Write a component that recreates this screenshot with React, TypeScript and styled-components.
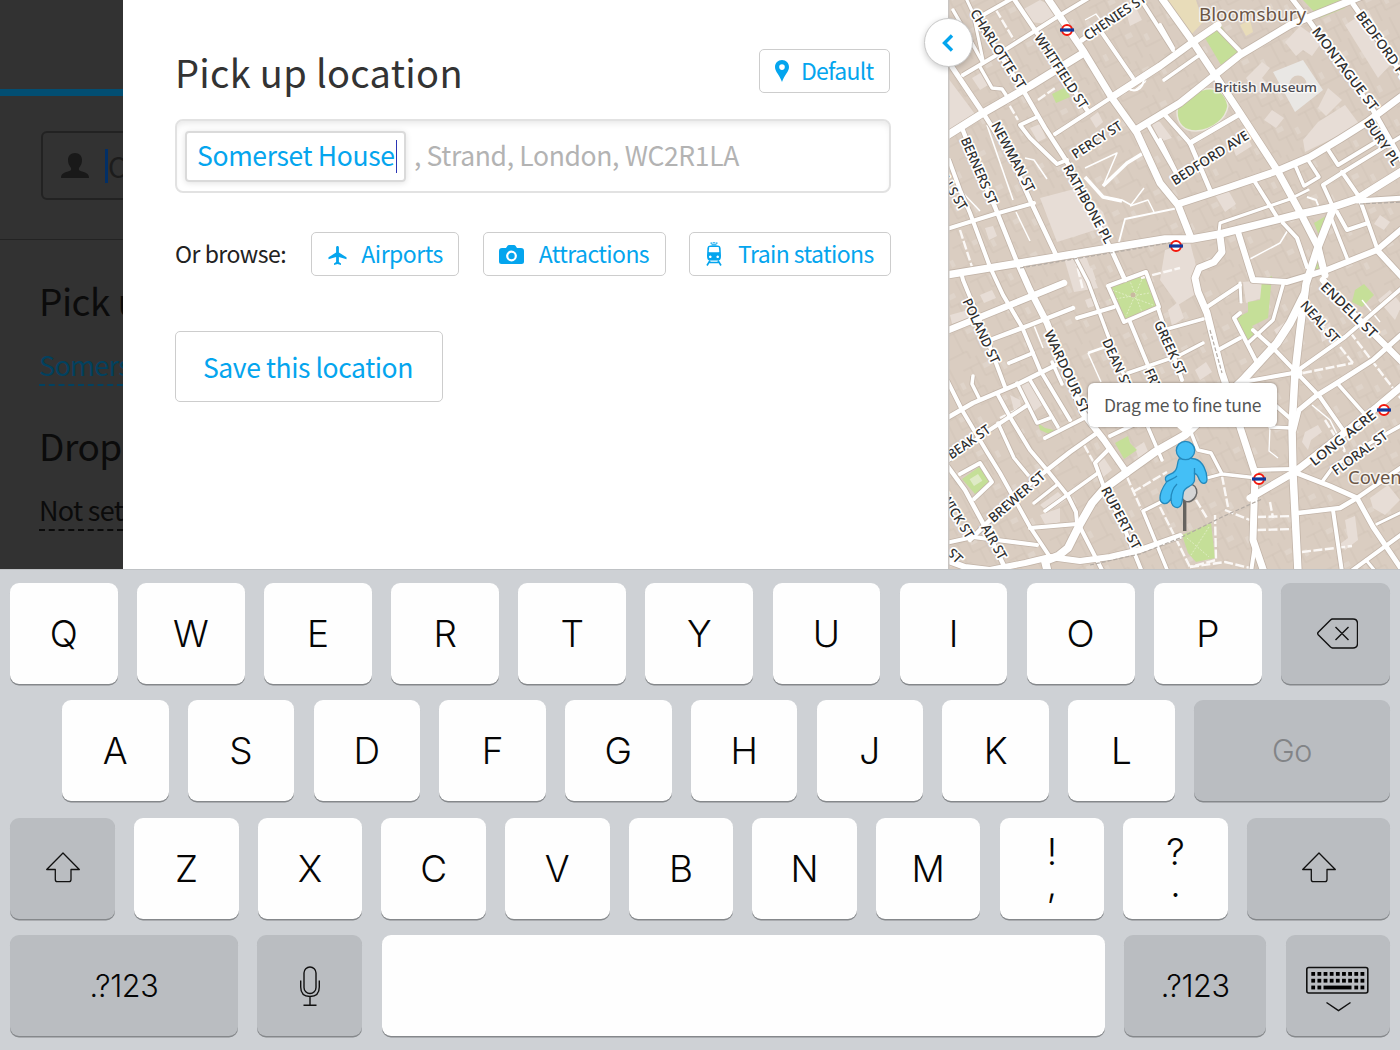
import React from 'react';
import styled, { createGlobalStyle } from 'styled-components';

const BLUE = '#04a5ee';
const UI_FONT = "'Noto Sans CJK SC', 'Noto Sans', sans-serif";
const KEY_FONT = "Inter, 'Liberation Sans', sans-serif";
const MAP_FONT = "'Noto Sans', 'Open Sans', sans-serif";

const GlobalStyle = createGlobalStyle`
  * { box-sizing: border-box; }
  body { margin: 0; background: #ced1d5; overflow: hidden; }
  button { font: inherit; padding: 0; margin: 0; cursor: pointer; }
`;

const Screen = styled.div`
  width: 1400px;
  height: 1050px;
  display: flex;
  flex-direction: column;
  overflow: hidden;
  font-family: ${UI_FONT};
`;

const Workspace = styled.div`
  display: flex;
  height: 569px;
  flex: none;
`;

/* ---------- dimmed page behind the sheet ---------- */

const Backdrop = styled.aside`
  width: 123px;
  flex: none;
  overflow: hidden;
  background: #323232;
  white-space: nowrap;
  display: flex;
  flex-direction: column;
`;

const BackdropBar = styled.div`
  height: 96px;
  flex: none;
  border-bottom: 7px solid #024e72;
`;

const BackdropSearch = styled.div`
  height: 144px;
  flex: none;
  padding: 35px 0 0 41px;
  border-bottom: 1px solid #232323;
`;

const BackdropField = styled.div`
  width: 240px;
  height: 69px;
  border: 2px solid #222;
  border-radius: 6px;
  display: flex;
  align-items: center;
  padding-left: 18px;
  font-size: 28px;
  color: #1c1c1c;
`;

const BackdropCaret = styled.span`
  width: 3px;
  height: 34px;
  margin-left: 16px;
  background: #022f66;
`;

const BackdropBody = styled.div`
  padding-left: 39px;
  display: flex;
  flex-direction: column;
`;

const BackdropTitle = styled.div<{ $top: number }>`
  margin-top: ${(p) => p.$top}px;
  height: 46px;
  line-height: 46px;
  font-size: 37px;
  letter-spacing: -0.5px;
  color: #0b0b0b;
`;

const BackdropLink = styled.div<{ $color: string }>`
  margin-top: 21px;
  height: 42px;
  line-height: 41px;
  font-size: 27px;
  letter-spacing: -0.7px;
  color: ${(p) => p.$color};
  border-bottom: 2px dashed ${(p) => p.$color};
`;

/* ---------- sheet ---------- */

const Sheet = styled.main`
  width: 825px;
  flex: none;
  background: #fff;
  padding: 49px 57px 0 52px;
  display: flex;
  flex-direction: column;
  align-items: stretch;
`;

const SheetHeader = styled.header`
  display: flex;
  justify-content: space-between;
  height: 44px;
  padding-right: 1px;
`;

const Title = styled.h1`
  margin: 0;
  font-weight: 400;
  font-size: 38px;
  line-height: 46px;
  letter-spacing: 0.3px;
  color: #333;
  white-space: nowrap;
`;

const ChipButton = styled.button<{ $w: number; $left: number; $gap: number; $track: number }>`
  width: ${(p) => p.$w}px;
  height: 44px;
  flex: none;
  display: flex;
  align-items: center;
  gap: ${(p) => p.$gap}px;
  padding: 0 0 1px ${(p) => p.$left}px;
  border: 1px solid #cdcdcd;
  border-radius: 5px;
  background: #fff;
  color: ${BLUE};
  font-family: ${UI_FONT};
  font-size: 23px;
  line-height: 30px;
  letter-spacing: ${(p) => p.$track}px;
  white-space: nowrap;
  svg { flex: none; }
`;

const ChipText = styled.span`
  padding-bottom: 2px;
`;

const AddressField = styled.div`
  margin-top: 26px;
  height: 74px;
  border: 2px solid #e2e2e2;
  border-radius: 8px;
  box-shadow: inset 0 5px 7px -3px rgba(0, 0, 0, 0.1);
  display: flex;
  align-items: center;
  padding-left: 8px;
  font-size: 26.5px;
  line-height: 34px;
  white-space: nowrap;
`;

const Token = styled.div`
  width: 221px;
  height: 51px;
  flex: none;
  display: flex;
  align-items: center;
  padding-left: 10px;
  border: 2px solid #dadada;
  border-radius: 4px;
  box-shadow: 0 1px 6px rgba(0, 0, 0, 0.12);
  color: ${BLUE};
`;

const TokenText = styled.span`
  width: 199px;
  letter-spacing: -0.35px;
  padding-bottom: 2px;
`;

const Caret = styled.span`
  width: 1px;
  height: 33px;
  flex: none;
  background: #2a35b5;
`;

const AddressRest = styled.span`
  margin-left: 8px;
  letter-spacing: -0.35px;
  padding-bottom: 2px;
  color: #b3b3b3;
`;

const BrowseRow = styled.div`
  margin-top: 39px;
  display: flex;
  align-items: center;
  justify-content: space-between;
  height: 44px;
`;

const BrowseLabel = styled.span`
  width: 113px;
  font-size: 23px;
  line-height: 30px;
  letter-spacing: -0.5px;
  color: #222;
  white-space: nowrap;
  padding-bottom: 3px;
`;

const SaveButton = styled.button`
  margin-top: 55px;
  width: 268px;
  height: 71px;
  padding: 0 2px 0 0;
  border: 1px solid #cdcdcd;
  border-radius: 5px;
  background: #fff;
  color: ${BLUE};
  font-family: ${UI_FONT};
  font-size: 26.5px;
  line-height: 34px;
  letter-spacing: -0.42px;
  white-space: nowrap;
`;

/* ---------- map ---------- */

const MapPane = styled.section`
  position: relative;
  width: 452px;
  flex: none;
  height: 569px;
`;

const CollapseButton = styled.button`
  position: absolute;
  left: -24px;
  top: 18px;
  width: 49px;
  height: 49px;
  border-radius: 50%;
  border: 1.5px solid #c8c8c8;
  background: #fff;
  box-shadow: 0 2px 6px rgba(0, 0, 0, 0.2);
  display: flex;
  align-items: center;
  justify-content: center;
  padding-right: 2px;
`;

const Callout = styled.div`
  position: absolute;
  left: 140px;
  top: 383px;
  width: 189px;
  height: 44px;
  border-radius: 6px;
  background: #fff;
  box-shadow: 0 0 3px rgba(0, 0, 0, 0.4);
  display: flex;
  align-items: center;
  justify-content: center;
  font-size: 17.5px;
  line-height: 24px;
  letter-spacing: -0.4px;
  color: #555;
  white-space: nowrap;
  &::after {
    content: '';
    position: absolute;
    left: 88px;
    top: 43px;
    border: 9px solid transparent;
    border-top: 8px solid #fff;
    border-bottom: 0;
  }
`;

type Road = [string, number];

const roads: Road[] = [
  ['1046,-4 1084,52 1112,98 1137,133 1160,183 1178,205 1191,238', 7],
  ['948,135 983,113 1030,86 1082,54', 7.5],
  ['1055,134 1112,97', 4],
  ['1112,97 1160,66 1193,42 1218,25', 7],
  ['1137,129 1180,103 1215,75 1240,55 1290,25 1362,-4', 7],
  ['1160,-4 1193,42 1215,75 1240,113 1277,170 1300,212 1318,247 1325,275', 7],
  ['1178,204 1227,188 1277,171 1310,157 1340,139 1367,122 1402,96', 7],
  ['946,275 1020,263 1110,248 1165,239 1192,239 1220,234 1300,214 1333,207 1357,199 1402,171', 7.5],
  ['1357,201 1402,198', 5],
  ['1220,236 1222,252 1214,262 1199,268 1195,278 1198,292 1207,313 1222,373 1240,427 1255,473 1253,540 1264,572', 7],
  ['1333,209 1318,247 1306,284 1300,330 1295,373 1292,427 1293,473 1298,572', 7.5],
  ['1304,295 1290,323 1277,343 1243,380 1185,435 1155,452 1127,472 1105,488 1092,503 1080,524 1068,548 1058,556 1045,561 1048,573', 8],
  ['946,560 965,567 990,570 1025,563 1050,557 1080,561 1110,557 1140,550 1180,536', 6],
  ['1238,232 1253,280 1287,282 1327,270 1377,250 1402,229', 6],
  ['1377,250 1402,277', 6],
  ['1018,263 1030,290 1047,323 1062,362 1083,413 1104,440 1127,473', 6.5],
  ['961,272 963,280 984,331 1005,387', 4],
  ['985,116 1010,155 1030,200 1057,257', 4.5],
  ['962,128 979,171 995,207 1017,262', 4.5],
  ['949,160 960,190 970,213 990,267 1003,295 1022,327 1040,370 1070,420', 4],
  ['947,229 995,214 1034,203', 4],
  ['965,-4 973,13 983,60', 3],
  ['973,13 1023,90 1045,128 1067,162 1110,247 1125,280', 4.5],
  ['952,67 983,113', 5],
  ['1012,-4 1037,33 1087,110', 4.5],
  ['963,75 1000,53 1057,17 1092,-4', 4],
  ['983,15 1013,-2', 4],
  ['1082,40 1145,-4', 5],
  ['1100,30 1133,78', 4], ['1143,3 1173,50', 4],
  ['980,67 992,88 1002,89 1006,95', 3.5],
  ['1037,117 1020,125 1030,138 1057,164 1067,160', 4],
  ['983,63 973,45 953,10', 3.5],
  ['1147,123 1180,180', 4],
  ['1165,115 1190,143 1210,190', 4.5],
  ['1190,143 1238,115', 5],
  ['1215,25 1242,53', 4], ['1160,25 1173,48', 4], ['1164,80 1198,56', 3.5],
  ['1290,-4 1310,22 1373,110 1402,161', 5],
  ['1353,4 1402,74', 5],
  ['1160,140 1178,176', 4],
  ['1255,182 1277,217', 4],
  ['1295,165 1304,186 1319,177 1308,160', 3.5],
  ['1327,148 1338,165 1376,142', 4],
  ['1333,207 1323,185 1345,171 1402,136', 4],
  ['1342,172 1360,198', 4],
  ['1337,212 1347,230 1368,223', 4],
  ['1360,200 1377,248', 4],
  ['1219,232 1220,223 1252,212 1290,199 1308,190', 3],
  ['1283,223 1297,238 1307,267', 4],
  ['1330,215 1347,258', 3.5],
  ['946,331 1010,305 1064,283', 6.5],
  ['990,340 1030,325 1073,308', 4.5],
  ['1077,318 1114,307', 4],
  ['1108,286 1146,272 1159,307 1124,322 1108,286', 4],
  ['1075,257 1088,282 1107,333 1127,383', 3.5],
  ['1158,308 1170,345 1182,380', 4],
  ['1130,322 1147,363 1162,400', 4],
  ['1128,373 1180,355 1203,343', 3.5],
  ['947,418 973,403 1020,383 1060,363', 4.5],
  ['1009,363 1033,353', 4],
  ['973,376 972,384 980,400', 3.5],
  ['947,380 962,410 987,452 1000,473 1030,527 1050,557', 4],
  ['997,393 1010,417 1030,450 1047,470 1068,496 1076,512 1077,523', 4],
  ['998,423 1014,458 1028,475', 3.5],
  ['1017,383 1037,423 1050,418', 3.5],
  ['1030,380 1058,427', 3.5], ['1052,362 1062,384', 3.5],
  ['1045,438 1090,415', 4],
  ['970,540 1010,500 1047,470 1070,452 1097,433', 4.5],
  ['946,462 985,433 1026,406', 4],
  ['946,464 965,490 985,527 1007,572', 4.5],
  ['960,474 980,463 992,482 974,499', 4],
  ['1034,503 1058,484', 3.5], ['1045,511 1098,473', 3.5],
  ['1030,528 1077,524', 4],
  ['946,543 973,537 1037,545', 4],
  ['1110,448 1095,463 1105,490 1121,520 1142,572', 4],
  ['1080,527 1103,572', 4],
  ['1110,436 1135,424', 4], ['1147,425 1162,460', 3.5],
  ['1165,500 1143,511 1168,572', 3.5],
  ['1190,430 1198,450 1211,453 1222,474 1257,478', 3.5],
  ['1207,478 1222,474', 3],
  ['1160,331 1203,319', 3.5], ['1207,307 1240,285', 4],
  ['1240,283 1241,302', 3], ['1218,350 1240,338', 4],
  ['1240,313 1234,318 1257,363', 4],
  ['1248,343 1273,320 1283,285', 3.5],
  ['1253,330 1275,350 1297,373 1320,397 1343,430', 4],
  ['1297,371 1345,337 1402,288', 4],
  ['1294,430 1299,410 1316,396 1337,383 1373,360 1402,334', 5],
  ['1195,402 1243,382 1293,373', 4],
  ['1323,280 1349,310 1373,333 1402,362', 6.5],
  ['1337,383 1368,418', 3.5],
  ['1250,498 1293,473 1310,460 1377,407 1402,386', 7],
  ['1322,482 1333,467 1370,443 1402,425', 3.5],
  ['1294,472 1330,486 1357,498 1373,527 1402,570', 5],
  ['1298,513 1340,508 1357,498 1402,467', 4.5],
  ['1333,510 1342,572', 4], ['1350,572 1402,534', 4], ['1377,524 1402,512', 3],
  ['1255,470 1293,469', 4], ['1275,405 1292,420', 4], ['1270,427 1292,428', 3.5],
  ['1255,545 1251,572', 4], ['1366,560 1376,572', 3],
];

const paths: Road[] = [
  ['987,125 1013,200', 1.6], ['949,160 963,193 980,211', 1.5], ['1085,177 1103,197 1122,201', 3.5],
  ['1103,186 1127,163 1145,152', 3.5], ['1103,186 1117,153 1085,168', 1.5],
  ['1178,208 1125,219 1119,242', 1.8], ['1130,206 1148,200 1154,212', 1.5], ['1122,200 1131,205 1144,188', 1.5],
  ['1025,158 1034,160 1047,179', 1.5], ['1016,212 1030,241', 1.5], ['1033,323 1043,348', 1.5],
  ['1248,260 1280,243 1288,230', 1.5], ['1088,353 1108,346', 2.5], ['1088,353 1101,382', 1.5],
  ['1270,427 1269,451 1278,458', 1.3], ['1307,197 1316,200 1320,210', 2], ['1312,405 1330,420 1345,450', 1.5],
  ['1085,20 1096,14 1108,30', 1.3], ['1135,90 1145,82 1147,77', 1.2], ['1362,300 1380,322', 1.4],
];

const dashedPaths = [
  '960,230 972,267', '1075,257 1083,290', '1004,96 1018,120', '1038,100 1055,88', '1084,445 1098,470',
  '1127,477 1155,540', '1133,492 1167,472', '1160,507 1190,567', '1190,490 1207,518', '1215,515 1216,560 1190,567',
  '1222,476 1228,507', '1225,510 1250,520', '1257,517 1294,516', '1257,530 1294,529', '1270,502 1273,518', '1303,373 1353,363',
  '1353,363 1320,322', '1350,332 1402,400', '1302,552 1352,546', '996,10 1014,40', '1141,278 1180,268', '1000,418 1025,406',
  '1325,420 1345,452', '1190,567 1225,562 1250,568',
];

const buildings = [
  '1040,198 1078,188 1103,212 1108,226 1057,242', '948,78 978,118 948,132', '1022,10 1040,0 1060,10 1048,24 1030,22',
  '1064,258 1085,254 1098,288 1074,292', '1285,42 1300,26 1322,42 1312,56 1303,50 1296,56',
  '1246,78 1262,62 1270,68 1262,78 1268,84 1256,94', '1318,122 1345,105 1360,125 1305,152 1303,140',
  '1328,88 1342,100 1326,116 1318,108', '1272,110 1284,118 1276,128 1264,120',
  '1020,384 1030,380 1042,405 1033,412', '1165,250 1190,242 1202,290 1178,305 1160,280',
  '1305,432 1318,425 1322,432 1311,440 1308,450 1302,442', '1370,498 1388,485 1400,500 1385,515 1373,508',
  '1345,520 1355,516 1358,540 1345,550 1340,544 1348,538', '1040,515 1060,508 1060,522 1046,526',
  '985,228 993,226 997,236 989,240', '1378,300 1390,290 1402,305 1395,320', '1215,195 1228,190 1236,204 1225,212',
  '1168,310 1178,302 1184,318 1172,326', '1345,25 1368,10 1395,60 1378,78', '1095,465 1104,458 1112,470 1102,478',
  '1243,282 1262,280 1262,298 1246,303', '1135,448 1144,442 1150,456 1140,462', '1080,270 1092,268 1096,280 1084,284',
  '972,78 982,72 990,84 980,90', '1150,120 1160,122 1172,138 1160,142', '1090,118 1098,112 1103,122 1096,128',
  '1010,395 1020,400 1022,412 1014,410', '950,315 968,310 970,318 952,324', '1380,215 1390,222 1384,230 1374,224',
  '1230,140 1245,132 1252,146 1236,156',
  '1030,128 1040,124 1046,138 1038,142',
  '1320,330 1330,322 1332,336 1322,342', '1274,330 1288,320 1290,326 1278,336', '1040,505 1058,492 1066,500 1048,512',
  '980,295 992,290 996,298 984,303', '1170,5 1178,0 1185,14 1176,18', '1126,12 1136,8 1142,20 1130,26',
  '1085,300 1096,296 1100,304 1088,308', '1195,370 1206,362 1212,372 1200,380',
];

const greens = [
  '1202,33 1219,23 1239,52 1221,65', '1108,287 1144,274 1157,306 1125,319', '1182,535 1211,523 1215,558 1196,562 1188,553',
  '1052,94 1066,87 1070,97 1056,103', '1262,280 1272,276 1268,318 1252,326 1257,333 1248,345 1236,318 1248,312 1248,302 1260,300',
  '1314,223 1326,216 1320,238', '1318,252 1325,268 1313,270', '1355,290 1364,284 1374,295 1362,307 1352,302', '1115,443 1128,436 1130,443 1137,450 1124,459',
  '962,479 979,467 991,482 975,494', '1303,0 1350,-2 1345,8 1320,18',
  '1038,423 1045,428 1054,430 1051,435 1040,430',
];

type Label = [string, number, number, number, number];

const streets: Label[] = [
  ['CHARLOTTE ST', 998, 49, 57.5, 91], ['WHITFIELD ST', 1061, 71, 57, 86], ['CHENIES ST', 1115, 17, -34, 72],
  ['PERCY ST', 1097, 140, -33, 57], ['NEWMAN ST', 1013, 157, 62, 77], ['BERNERS ST', 979, 171, 66.5, 72],
  ['WELLS ST', 949, 185, 58, 56], ['RATHBONE PL', 1088, 204, 61, 88], ['MONTAGUE ST', 1345, 69, 53, 100],
  ['BEDFORD PL', 1383, 46, 54, 82], ['BURY PL', 1382, 142, 56, 53], ['BEDFORD AVE', 1210, 158, -32.5, 89],
  ['POLAND ST', 981, 331, 65, 70], ['WARDOUR ST', 1067, 372, 65, 90], ['DEAN ST', 1117, 364, 66, 54],
  ['FRITH ST', 1159, 393, 66, 52], ['GREEK ST', 1170, 348, 65, 58], ['BEAK ST', 969, 442, -35, 49],
  ['BREWER ST', 1017, 497, -41, 70], ['AIR ST', 994, 542, 61, 38], ['WICK ST', 957, 516, 58, 50],
  ['ST', 955, 556, 45, 15], ['RUPERT ST', 1121, 518, 62, 69], ['NEAL ST', 1320, 322, 48, 51],
  ['ENDELL ST', 1349, 310, 44.5, 73], ['LONG ACRE', 1343, 438, -38.5, 80], ['FLORAL ST', 1360, 453, -36, 65],
];

const stations = [[1067, 30], [1176, 246], [1384, 410], [1259, 479]];

const StreetText = styled.text`
  font-family: ${MAP_FONT};
  font-size: 13.3px;
  font-weight: 500;
  fill: #2e2e2e;
  stroke: #fff;
  stroke-width: 3.5px;
  stroke-linejoin: round;
  paint-order: stroke;
  text-anchor: middle;
`;

const PlaceText = styled.text<{ $size: number; $fill: string; $weight?: number }>`
  font-family: ${MAP_FONT};
  font-size: ${(p) => p.$size}px;
  font-weight: ${(p) => p.$weight ?? 400};
  fill: ${(p) => p.$fill};
  stroke: rgba(255, 255, 255, 0.75);
  stroke-width: 3px;
  stroke-linejoin: round;
  paint-order: stroke;
`;

const MapCanvas = styled.svg`
  display: block;
`;

const CityMap = () => (
  <MapCanvas width="452" height="569" viewBox="948 0 452 569">
    <defs>
      <pattern id="plots" width="46" height="38" patternUnits="userSpaceOnUse" patternTransform="rotate(-27)">
        <path d="M0 8H18V0M18 8V22H34M34 0V30H46M0 30H12V38M26 22V38M8 8V30" fill="none" stroke="#cfc1b4" strokeWidth="0.7" />
        <path d="M20 10h7v5h-7zM37 18h4v7h-4z" fill="#dfd4ca" />
      </pattern>
    </defs>
    <rect x="948" width="452" height="569" fill="#dacdc1" />
    <rect x="948" width="452" height="569" fill="url(#plots)" />
    {buildings.map((p) => <polygon key={p} points={p} fill="#e7ddd6" />)}
    <polygon points="1168,0 1196,0 1203,22 1190,36" fill="#e8dcb9" />
    <polygon points="1240,25 1250,20 1253,32 1246,36" fill="#e8dcb9" />
    <polygon points="1273,72 1303,60 1323,90 1295,112" fill="#e9e7e4" />
    <circle cx="1298" cy="84" r="8.5" fill="#dacdc1" />
    {greens.map((p) => <polygon key={p} points={p} fill="#c5df98" />)}
    <path d="M1177 112C1177 100 1190 92 1206 89C1218 87 1226 94 1228 106C1226 118 1214 130 1196 131C1184 131 1177 124 1177 112Z" fill="#c5df98" stroke="#ebe6dc" strokeWidth="1.5" />
    <path d="M1112 290L1153 305M1143 277L1126 316M1109 300L1155 292M1128 276L1142 312M1187 538L1209 557M1209 527L1191 555" stroke="#e0edc4" strokeWidth="1" strokeDasharray="2 1.5" fill="none" />
    <rect x="971" y="476" width="10" height="8" fill="#dfeac6" transform="rotate(-33 976 480)" />
    <circle cx="1133" cy="295" r="2.5" fill="#c9b9a0" />
    {dashedPaths.map((p) => <polyline key={p} points={p} fill="none" stroke="#fbf8f6" strokeWidth="2.4" strokeDasharray="9 2.5" />)}
    {paths.map(([p, w]) => <polyline key={p} points={p} fill="none" stroke="#fff" strokeWidth={w} strokeLinejoin="round" />)}
    <g fill="none" stroke="#c2b4a8" strokeLinejoin="round">
      {roads.map(([p, w]) => <polyline key={p} points={p} strokeWidth={w + 1.6} />)}
    </g>
    <g fill="none" stroke="#fff" strokeLinejoin="round" strokeLinecap="round">
      {roads.map(([p, w]) => <polyline key={p} points={p} strokeWidth={w} />)}
      <path d="M1127 88C1133 92 1143 92 1144 78" strokeWidth="2" />
    </g>
    <circle cx="1296.500" cy="373" r="6" fill="#fff" />
    <g fill="none" stroke="#b3aba4" strokeWidth="1.2" strokeDasharray="4 2">
      <path d="M1020 268L1110 253L1175 242M1090 565L1140 554L1180 538L1222 517L1262 499M1360 204L1402 202M1210 330L1222 373" />
    </g>
    {streets.map(([name, x, y, angle, length]) => (
      <StreetText key={name + x} x={x} y={y} dy="4.5" textLength={length} lengthAdjust="spacingAndGlyphs" transform={`rotate(${angle} ${x} ${y})`}>{name}</StreetText>
    ))}
    <PlaceText x="1199" y="21" $size={18.5} $fill="#6b5646" textLength={107} lengthAdjust="spacingAndGlyphs">Bloomsbury</PlaceText>
    <PlaceText x="1214" y="91.500" $size={13.4} $fill="#4c4c52" $weight={500} textLength={103} lengthAdjust="spacingAndGlyphs">British Museum</PlaceText>
    <PlaceText x="1348" y="484" $size={18.5} $fill="#6b5646">Covent</PlaceText>
    {stations.map(([x, y]) => (
      <g key={x}>
        <circle cx={x} cy={y} r="5" fill="#fff" stroke="#f3170c" strokeWidth="2" />
        <rect x={x - 7} y={y - 1.600} width="14" height="3.200" fill="#10389b" />
      </g>
    ))}
    <rect x="948" width="1.500" height="569" fill="#c9c5c2" />
    <rect x="1183" y="496" width="3.400" height="35" fill="#66635f" />
    <ellipse cx="1189" cy="493" rx="7.500" ry="9" fill="#d5d5d5" stroke="#686868" strokeWidth="1.500" transform="rotate(25 1189 493)" />
    <g fill="#44bff6" stroke="#2389bd" strokeWidth="1.300" strokeLinejoin="round">
      <path d="M1179 459C1177 462 1178 468 1175 471C1172 475 1166 474 1165.500 478C1165 480 1166 481 1166.500 482C1163 487 1160 492 1160 498C1160 503 1165 505.500 1168.500 502L1171 499C1171 505 1174 508 1178 507.500C1183 506 1182 499 1183.500 492C1185 486 1194 487 1194.500 480L1194.500 473C1198 474 1198 477 1199.500 480C1202 485 1207 484 1207 479C1207 472 1203 461 1195 459C1190 458 1183 458 1179 459Z" />
      <circle cx="1185.500" cy="450.500" r="9.200" />
      <path d="M1166.500 482C1170 479 1174 479 1177 476M1177 484C1173 488 1171 493 1171 499M1194.500 468V474" fill="none" />
    </g>
  </MapCanvas>
);

/* ---------- icons ---------- */

const PinIcon = () => (
  <svg width="14" height="22" viewBox="0 0 14 22">
    <path fillRule="evenodd" fill={BLUE} d="M7 0C3 0 0 3 0 7c0 4.500 4.500 8 7 15 2.500-7 7-10.500 7-15 0-4-3-7-7-7Zm0 4.300a2.800 2.800 0 1 1 0 5.600 2.800 2.800 0 0 1 0-5.600Z" />
  </svg>
);

const RaisedIcon = styled.svg<{ $top: number }>`
  margin-top: ${(p) => p.$top}px;
`;

const PlaneIcon = () => (
  <RaisedIcon $top={4} width="19" height="20" viewBox="0 0 19 20">
    <path fill={BLUE} d="M18.500 13.200v-2L10.900 6.600V1.400C10.900.6 10.300 0 9.500 0S8.100.6 8.100 1.400v5.200L.5 11.200v2l7.600-2.300v5L6 17.500V19l3.500-1 3.500 1v-1.500l-2.100-1.600v-5Z" />
  </RaisedIcon>
);

const CameraIcon = () => (
  <RaisedIcon $top={2} width="25" height="20" viewBox="0 0 25 20">
    <path fill={BLUE} d="M3 3h4L8.500.7Q9 0 10 0h5q1 0 1.500.7L18 3h4q3 0 3 3v10.500q0 2.500-2.500 2.500h-20Q0 19 0 16.500V6Q0 3 3 3Z" />
    <circle cx="12.500" cy="11" r="4.300" fill="none" stroke="#fff" strokeWidth="2.200" />
  </RaisedIcon>
);

const TrainIcon = () => (
  <svg width="16" height="24" viewBox="0 0 16 24">
    <path fill={BLUE} d="M4.500.5h2v1.200h-2zM7.300 0h1.400v1.500H7.300zM9.500.5h2v1.200h-2zM5.500 2.200h5v1.300h-5z" />
    <path fillRule="evenodd" fill={BLUE} d="M4 3.500h8q2.500 0 2.600 2.500l.4 8q0 4.500-3 4.500H4q-3 0-3-4.500l.4-8Q1.500 3.500 4 3.500ZM3.300 5 2.700 9.500q0 .8.800.8h9q.8 0 .8-.8l-.6-4.500ZM4.300 13.500a1.300 1.300 0 1 0 .01 0ZM11.700 13.500a1.300 1.300 0 1 0 .01 0Z" />
    <path stroke={BLUE} strokeWidth="1.600" d="M4 18.500L1 23.500M12 18.500L15 23.500M3.500 20.500H12.500" />
  </svg>
);

const PersonIcon = () => (
  <svg width="28" height="26" viewBox="0 0 28 26">
    <path fill="#191919" d="M14 0c4.500 0 7 3 7 7 0 3-1 5.500-3 8-.5 1.500 0 2.500 1.500 3C24 19.500 28 20 28 25H0c0-5 4-5.500 8.500-7 1.500-.5 2-1.500 1.500-3-2-2.500-3-5-3-8 0-4 2.500-7 7-7Z" />
  </svg>
);

const ShiftIcon = () => (
  <svg width="35" height="32" viewBox="0 0 35 32">
    <path d="M18 1L34.300 17.500H26V27.500Q26 29.700 23.800 29.700H12.500Q10.300 29.700 10.300 27.500V17.500H1.700Z" fill="none" stroke="#111" strokeWidth="1.300" strokeLinejoin="round" />
  </svg>
);

const DeleteIcon = () => (
  <svg width="46" height="32" viewBox="-5 -0.500 46 32">
    <path d="M15.500 1.500H36Q40.500 1.500 40.500 6V26Q40.500 30.500 36 30.500H15.500Q14.500 30.300 13.500 29.500L1.200 17.200Q.2 16 1.200 14.800L13.500 2.500Q14.500 1.600 15.500 1.500ZM18.500 9.500L31.500 22.500M31.500 9.500L18.500 22.500" fill="none" stroke="#111" strokeWidth="1.400" strokeLinejoin="round" />
  </svg>
);

const MicIcon = () => (
  <svg width="22" height="42" viewBox="0 0 22 42">
    <path d="M5 8a6 6 0 0 1 12 0V22.500a6 6 0 0 1-12 0ZM1.700 15.500V22q0 9.500 9.300 9.500T20.300 22V15.500M11 31.500V40.300M4.500 40.300H17.500" fill="none" stroke="#111" strokeWidth="1.400" />
  </svg>
);

const HideKeyboardIcon = () => (
  <svg width="64" height="54" viewBox="1 -7.500 64 54">
    <rect x="1.800" y="1" width="61" height="25.500" rx="2" fill="none" stroke="#111" strokeWidth="1.600" />
    {[0, 1, 2].map((r) => [0, 1, 2, 3, 4, 5, 6, 7, 8].map((c) =>
      r === 2 && c > 1 && c < 7 ? null : <rect key={`${r}-${c}`} x={6.300 + c * 6.150} y={5.500 + r * 6.800} width="3.800" height="3.800" fill="#000" />
    ))}
    <rect x="18.500" y="19.100" width="28" height="3.800" fill="#000" />
    <path d="M21.500 36L33.500 44L45.500 36" fill="none" stroke="#111" strokeWidth="1.500" />
  </svg>
);

/* ---------- keyboard ---------- */

const Keyboard = styled.section`
  height: 481px;
  border-top: 1px solid #bfc2c5;
  background: #ced1d5;
  padding: 12.5px 10px 13.5px;
  display: flex;
  flex-direction: column;
  justify-content: space-between;
`;

const KeyRow = styled.div<{ $indent?: number }>`
  display: flex;
  justify-content: space-between;
  height: 101px;
  padding-left: ${(p) => p.$indent ?? 0}px;
`;

const Key = styled.button<{ $w: number; $dark?: boolean; $small?: boolean; $muted?: boolean; $track?: number }>`
  width: ${(p) => p.$w}px;
  height: 101px;
  flex: none;
  display: flex;
  flex-direction: column;
  align-items: center;
  justify-content: center;
  padding-top: ${(p) => (p.$dark ? 0 : 1)}px;
  border: 0;
  border-radius: 9px;
  background: ${(p) => (p.$dark ? '#babdc1' : '#fefefe')};
  box-shadow: 0 1.500px 0.500px #85888b;
  color: ${(p) => (p.$muted ? '#828487' : '#050505')};
  font-family: ${KEY_FONT};
  font-weight: 300;
  font-size: ${(p) => (p.$small ? 30.5 : 37)}px;
  line-height: 40px;
  letter-spacing: ${(p) => p.$track ?? 0}px;
`;

const KeyStack = styled.span`
  display: flex;
  flex-direction: column;
  align-items: center;
  line-height: 32px;
  padding-bottom: 2px;
`;

const App = () => (
  <Screen>
    <GlobalStyle />
    <Workspace>
      <Backdrop>
        <BackdropBar />
        <BackdropSearch>
          <BackdropField><PersonIcon /><BackdropCaret />C</BackdropField>
        </BackdropSearch>
        <BackdropBody>
          <BackdropTitle $top={37}>Pick u</BackdropTitle>
          <BackdropLink $color="#02415f">Somers</BackdropLink>
          <BackdropTitle $top={36}>Drop</BackdropTitle>
          <BackdropLink $color="#0b0b0b">Not set</BackdropLink>
        </BackdropBody>
      </Backdrop>
      <Sheet>
        <SheetHeader>
          <Title>Pick up location</Title>
          <ChipButton $w={131} $left={15} $gap={12} $track={-0.75}><PinIcon /><ChipText>Default</ChipText></ChipButton>
        </SheetHeader>
        <AddressField>
          <Token><TokenText>Somerset House</TokenText><Caret /></Token>
          <AddressRest>, Strand, London, WC2R1LA</AddressRest>
        </AddressField>
        <BrowseRow>
          <BrowseLabel>Or browse:</BrowseLabel>
          <ChipButton $w={148} $left={16} $gap={14} $track={-0.5}><PlaneIcon /><ChipText>Airports</ChipText></ChipButton>
          <ChipButton $w={183} $left={15} $gap={15} $track={-0.6}><CameraIcon /><ChipText>Attractions</ChipText></ChipButton>
          <ChipButton $w={202} $left={16} $gap={16} $track={-0.6}><TrainIcon /><ChipText>Train stations</ChipText></ChipButton>
        </BrowseRow>
        <SaveButton>Save this location</SaveButton>
      </Sheet>
      <MapPane>
        <CityMap />
        <Callout>Drag me to fine tune</Callout>
        <CollapseButton aria-label="Collapse">
          <svg width="12" height="18" viewBox="0 0 12 18"><path d="M10 1.500L2.500 9L10 16.500" fill="none" stroke={BLUE} strokeWidth="3.400" /></svg>
        </CollapseButton>
      </MapPane>
    </Workspace>
    <Keyboard>
      <KeyRow>
        {[...'QWERTYUIOP'].map((k) => <Key key={k} $w={107.800}>{k}</Key>)}
        <Key $w={109} $dark><DeleteIcon /></Key>
      </KeyRow>
      <KeyRow $indent={52}>
        {[...'ASDFGHJKL'].map((k) => <Key key={k} $w={106.500}>{k}</Key>)}
        <Key $w={196} $dark $small $muted $track={-0.5}>Go</Key>
      </KeyRow>
      <KeyRow>
        <Key $w={105} $dark><ShiftIcon /></Key>
        {[...'ZXCVBNM'].map((k) => <Key key={k} $w={104.500}>{k}</Key>)}
        <Key $w={104.500}><KeyStack><span>!</span><span>,</span></KeyStack></Key>
        <Key $w={104.500}><KeyStack><span>?</span><span>.</span></KeyStack></Key>
        <Key $w={143} $dark><ShiftIcon /></Key>
      </KeyRow>
      <KeyRow>
        <Key $w={228} $dark $small $track={-0.3}>.?123</Key>
        <Key $w={105} $dark><MicIcon /></Key>
        <Key $w={723.500} />
        <Key $w={142} $dark $small $track={-0.3}>.?123</Key>
        <Key $w={104.500} $dark><HideKeyboardIcon /></Key>
      </KeyRow>
    </Keyboard>
  </Screen>
);

export default App;
